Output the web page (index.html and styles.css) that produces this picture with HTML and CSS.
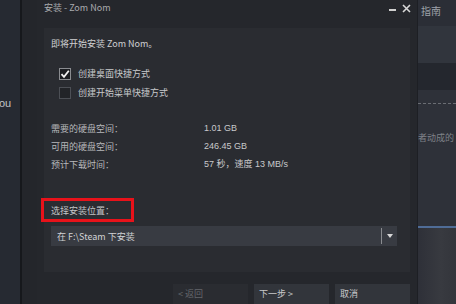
FILE: index.html
```html
<!DOCTYPE html>
<html>
<head>
<meta charset="utf-8">
<link rel="stylesheet" href="styles.css">
</head>
<body>
<div class="screen">
  <div class="left-bg"><span class="you">ou</span></div>
  <div class="divider"></div>
  <div class="gutter"></div>
  <div class="dialog">
    <div class="titlebar">
      <span class="title">安装 - Zom Nom</span>
      <span class="controls">
        <span class="min"></span>
        <svg class="close" width="9" height="9" viewBox="0 0 9 9"><path d="M1 1L8 8M8 1L1 8" stroke="#d8d8d8" stroke-width="1.6"/></svg>
      </span>
    </div>
    <div class="panel">
      <div class="intro">即将开始安装 Zom Nom。</div>
      <div class="checks">
        <label class="check"><span class="box checked"><svg width="10" height="10" viewBox="0 0 10 10"><path d="M1.5 5.2L4 7.8L8.8 1.8" fill="none" stroke="#f2f2f2" stroke-width="1.8"/></svg></span>创建桌面快捷方式</label>
        <label class="check"><span class="box"></span>创建开始菜单快捷方式</label>
      </div>
      <div class="stats">
        <div class="stat"><span class="k">需要的硬盘空间：</span><span class="v">1.01 GB</span></div>
        <div class="stat"><span class="k">可用的硬盘空间：</span><span class="v">246.45 GB</span></div>
        <div class="stat"><span class="k">预计下载时间：</span><span class="v">57 秒，速度 13 MB/s</span></div>
      </div>
      <div class="loc-label">选择安装位置：<span class="highlight"></span></div>
      <div class="select">
        <span class="sel-text">在 F:\Steam 下安装</span>
        <span class="sel-sep"></span>
        <span class="sel-arrow"></span>
      </div>
    </div>
    <div class="footer">
      <span class="btn disabled">&lt; 返回</span>
      <span class="btn">下一步 &gt;</span>
      <span class="btn">取消</span>
    </div>
  </div>
  <div class="right">
    <div class="r-top">指南</div>
    <div class="r-a"></div>
    <div class="r-band"></div>
    <div class="r-b">
      <div class="dash"></div>
      <div class="r-text">者动成的</div>
    </div>
    <div class="r-c"></div>
  </div>
</div>
</body>
</html>
```

FILE: styles.css
```css
* { box-sizing: border-box; }
html, body { margin: 0; padding: 0; }
body {
  width: 456px; height: 304px; overflow: hidden;
  background: #1f2229;
  font-family: "Noto Sans CJK SC", "Liberation Sans", sans-serif;
  font-size: 9px;
  color: #c4c5c7;
}
.screen { display: flex; width: 456px; height: 304px; }
.left-bg {
  width: 20px; background: #262a32; position: relative;
}
.you { position: absolute; left: -1px; top: 97px; font-family: "Liberation Sans", sans-serif; font-size: 11px; color: #c2c4c8; }
.divider { width: 2px; background: #16181c; }
.gutter { width: 15px; background: #24262b; }
.dialog {
  width: 380px; background: #25272c;
  display: flex; flex-direction: column;
}
.titlebar {
  height: 28px; flex: none; display: flex; justify-content: space-between;
  padding: 1px 6px 0 7px;
}
.title { font-size: 9px; color: #a9abae; line-height: 14px; }
.controls { display: flex; gap: 6px; align-items: flex-start; padding-top: 3px; }
.min { width: 7px; height: 2px; background: #d0d0d0; margin-top: 5px; }
.close { display: block; }
.panel {
  margin: 0 7px; height: 244px; flex: none; background: #2a2c31;
  padding: 9px 13px 0 7px; position: relative;
}
.intro { line-height: 13px; color: #d0d1d3; }
.checks { margin-top: 18px; padding-left: 8px; display: flex; flex-direction: column; gap: 7px; }
.check { display: flex; align-items: center; gap: 7px; line-height: 12px; color: #c8c9cb; }
.box {
  width: 12px; height: 12px; border: 1px solid #4c4f55; background: #222428;
  display: flex; align-items: center; justify-content: center;
}
.box.checked { border-color: #8a8c90; background: #1c1e22; }
.box svg { display: block; }
.stats { margin-top: 23px; display: flex; flex-direction: column; gap: 5px; }
.stat { display: flex; line-height: 13px; }
.k { width: 153px; color: #b7b8bb; }
.v { font-family: "Liberation Sans", "Noto Sans CJK SC", sans-serif; color: #c8c9cb; }
.loc-label { margin-top: 33px; line-height: 13px; color: #c4c5c7; position: relative; width: 80px; }
.highlight {
  position: absolute; left: -10px; top: -6px; width: 93px; height: 24px;
  border: 3px solid #e8121a;
}
.select {
  margin-top: 9px; height: 20px; background: #383b42;
  display: flex; align-items: center; padding-left: 6px;
}
.sel-text { flex: 1; color: #d2d3d5; }
.sel-sep { width: 1px; height: 16px; background: #8a8c90; margin-right: 5px; }
.sel-arrow {
  width: 0; height: 0; border-left: 3.5px solid transparent; border-right: 3.5px solid transparent;
  border-top: 4px solid #d8d8d8; margin-right: 4px;
}
.footer {
  display: flex; gap: 6px; padding: 12px 7px 0 0; justify-content: flex-end;
}
.btn {
  width: 75px; height: 22px; background: #32353b; color: #c8c9cb;
  padding-left: 5px; line-height: 20px;
}
.btn.disabled { background: #2a2c31; color: #64666b; margin-right: 0; }
.right { width: 39px; display: flex; flex-direction: column; background: #2a2d34; border-left: 1px solid #1d1f24; }
.r-top { height: 26px; background: #2b2e36; color: #9ea2a9; padding: 3px 0 0 3px; font-size: 10px; }
.r-a { height: 37px; background: #31353d; }
.r-band { height: 27px; background: #24272e; }
.r-b { height: 136px; background: #2e3139; padding-top: 13px; }
.dash { border-top: 1px dashed #6a6d73; height: 0; }
.r-text { margin-top: 27px; color: #7e8188; font-size: 9px; white-space: nowrap; overflow: hidden; }
.r-c { flex: 1; background: linear-gradient(90deg, #2e3038, #383a40 60%, #33353b); border-top: 2px solid #4f6c97; }
```
